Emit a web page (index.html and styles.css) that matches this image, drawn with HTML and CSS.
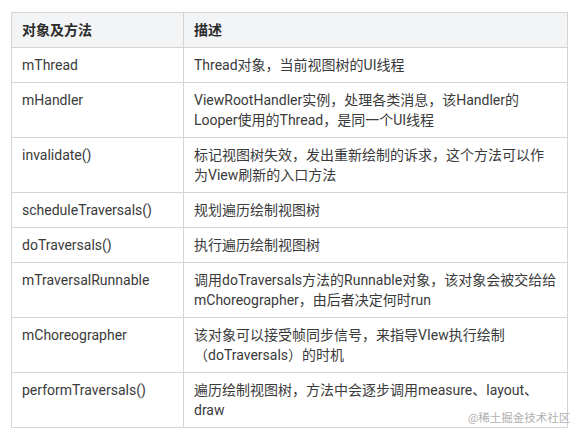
FILE: index.html
```html
<!DOCTYPE html>
<html lang="zh-CN">
<head>
<meta charset="utf-8">
<link rel="stylesheet" href="styles.css">
</head>
<body>
<div class="wrap">
<table class="tbl">
  <colgroup><col class="c1"><col class="c2"></colgroup>
  <thead>
    <tr><th>对象及方法</th><th>描述</th></tr>
  </thead>
  <tbody>
    <tr><td>mThread</td><td>Thread对象，当前视图树的UI线程</td></tr>
    <tr><td>mHandler</td><td>ViewRootHandler实例，处理各类消息，该Handler的<br>Looper使用的Thread，是同一个UI线程</td></tr>
    <tr><td>invalidate()</td><td>标记视图树失效，发出重新绘制的诉求，这个方法可以作<br>为View刷新的入口方法</td></tr>
    <tr><td>scheduleTraversals()</td><td>规划遍历绘制视图树</td></tr>
    <tr><td>doTraversals()</td><td>执行遍历绘制视图树</td></tr>
    <tr><td>mTraversalRunnable</td><td>调用doTraversals方法的Runnable对象，该对象会被交给给<br>mChoreographer，由后者决定何时run</td></tr>
    <tr><td>mChoreographer</td><td>该对象可以接受帧同步信号，来指导VIew执行绘制<br>（doTraversals）的时机</td></tr>
    <tr><td>performTraversals()</td><td>遍历绘制视图树，方法中会逐步调用measure、layout、<br>draw</td></tr>
  </tbody>
</table>
<div class="mark">@稀土掘金技术社区</div>
</div>
</body>
</html>
```
FILE: styles.css
```css
html, body {
  margin: 0;
  padding: 0;
  background: #ffffff;
}
body {
  font-family: "Roboto", "Noto Sans CJK SC", sans-serif;
  font-size: 14px;
  color: #3a3a3a;
}
.wrap {
  position: relative;
  padding: 12px 0 0 11px;
}
.tbl {
  border-collapse: collapse;
  width: 557px;
  table-layout: fixed;
}
.c1 { width: 172px; }
.tbl th, .tbl td {
  border: 1px solid #d4d4d4;
  padding: 7px 10px;
  line-height: 20px;
  text-align: left;
  vertical-align: top;
  white-space: nowrap;
}
.tbl th {
  background: #f3f4f6;
  font-weight: bold;
  color: #2b2b2b;
}
.mark {
  position: absolute;
  left: 468px;
  top: 410px;
  font-size: 11.5px;
  line-height: 16px;
  color: #b0b0b0;
  white-space: nowrap;
}
```
